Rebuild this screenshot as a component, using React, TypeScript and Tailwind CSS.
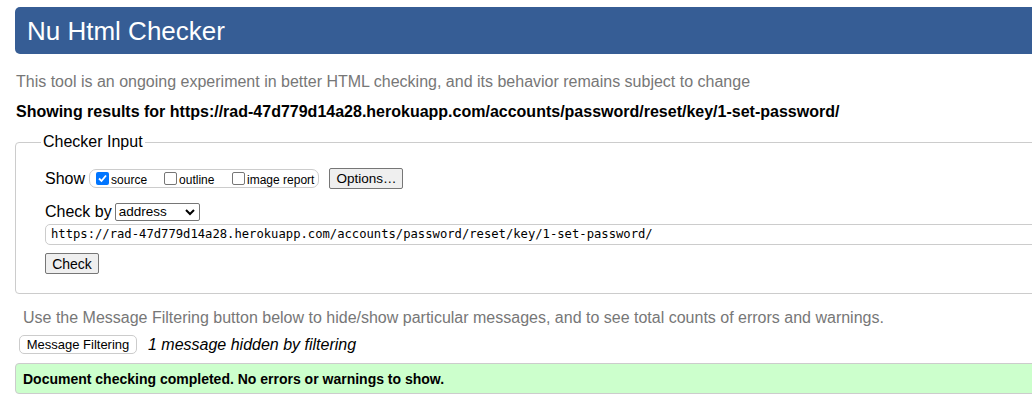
import React from 'react';

const CheckBox: React.FC<{ checked?: boolean; label: string }> = ({ checked, label }) => (
  <label className="flex items-center gap-[2px]">
    {checked ? (
      <span className="w-[13px] h-[13px] rounded-[2px] bg-[#0075ff] flex items-center justify-center">
        <svg width="11" height="11" viewBox="0 0 11 11">
          <path d="M2 5.5 L4.5 8 L9 2.5" stroke="white" strokeWidth="1.8" fill="none" />
        </svg>
      </span>
    ) : (
      <span className="w-[13px] h-[13px] rounded-[2px] border border-[#767676] bg-white" />
    )}
    <span className="text-[12px] leading-none mt-[3px]">{label}</span>
  </label>
);

const App: React.FC = () => {
  const url = 'https://rad-47d779d14a28.herokuapp.com/accounts/password/reset/key/1-set-password/';
  return (
    <div className="w-full h-[406px] overflow-hidden bg-white text-black" style={{ fontFamily: '"Liberation Sans", Arial, sans-serif' }}>
      <div className="w-[1100px] pl-[15px] pt-[7px]">
        <div className="h-[47px] bg-[#365d95] rounded-l-[5px] flex items-center pl-[12px]">
          <h1 className="text-white text-[26px] leading-none mt-[1px]">Nu Html Checker</h1>
        </div>

        <p className="text-[#777] text-[16px] leading-none mt-[20px] ml-[1px]">
          This tool is an ongoing experiment in better HTML checking, and its behavior remains subject to change
        </p>
        <p className="font-bold text-[16px] leading-none mt-[14px] ml-[1px]">
          Showing results for {url}
        </p>

        <fieldset className="border border-[#ccc] rounded-l-[4px] mt-[14px] h-[160px] pl-[29px] pr-0 pt-[14px]">
          <legend className="text-[16px] leading-none -ml-[4px] px-[2px] -mt-[1px]">Checker Input</legend>

          <div className="flex items-center mt-[4px]">
            <span className="text-[16px] leading-none mr-[4px]">Show</span>
            <div className="h-[19px] border border-[#ccc] rounded-[7px] flex items-center pl-[6px] pr-[4px]">
              <div className="w-[68px]"><CheckBox checked label="source" /></div>
              <div className="w-[68px]"><CheckBox label="outline" /></div>
              <div><CheckBox label="image report" /></div>
            </div>
            <button className="ml-[10px] h-[21px] w-[74px] border border-[#767676] rounded-[2px] bg-[#efefef] text-[13.5px] leading-none">
              Options…
            </button>
          </div>

          <div className="flex items-center mt-[14px]">
            <span className="text-[16px] leading-none mr-[3px]">Check by</span>
            <div className="w-[85px] h-[18px] border border-[#767676] rounded-[2px] flex items-center justify-between pl-[3px] pr-[4px]">
              <span className="text-[13.5px] leading-none">address</span>
              <svg width="10" height="7" viewBox="0 0 10 7">
                <path d="M1 1 L5 5 L9 1" stroke="black" strokeWidth="2" fill="none" />
              </svg>
            </div>
          </div>

          <div className="mt-[3px] h-[21px] border border-[#ccc] rounded-l-[5px] flex items-center pl-[5px]">
            <span className="text-[12.2px] leading-none" style={{ fontFamily: '"DejaVu Sans Mono", monospace' }}>{url}</span>
          </div>

          <button className="mt-[8px] h-[21px] w-[54px] border border-[#767676] rounded-[2px] bg-[#efefef] text-[14px] leading-none flex items-center justify-center">
            Check
          </button>
        </fieldset>

        <p className="text-[#777] text-[16px] leading-none mt-[16px] ml-[8px]">
          Use the Message Filtering button below to hide/show particular messages, and to see total counts of errors and warnings.
        </p>

        <div className="flex items-center mt-[9px] ml-[4px]">
          <button className="h-[19px] w-[118px] border border-[#ccc] rounded-[5px] bg-white text-[13px] leading-none flex items-center justify-center">
            Message Filtering
          </button>
          <span className="italic text-[16px] leading-none ml-[11px]">1 message hidden by filtering</span>
        </div>

        <div className="mt-[9px] h-[31px] bg-[#ccffcc] border border-[#ccc] rounded-l-[4px] flex items-center pl-[7px]">
          <span className="font-bold text-[14px] leading-none">Document checking completed. No errors or warnings to show.</span>
        </div>
      </div>
    </div>
  );
};

export default App;
